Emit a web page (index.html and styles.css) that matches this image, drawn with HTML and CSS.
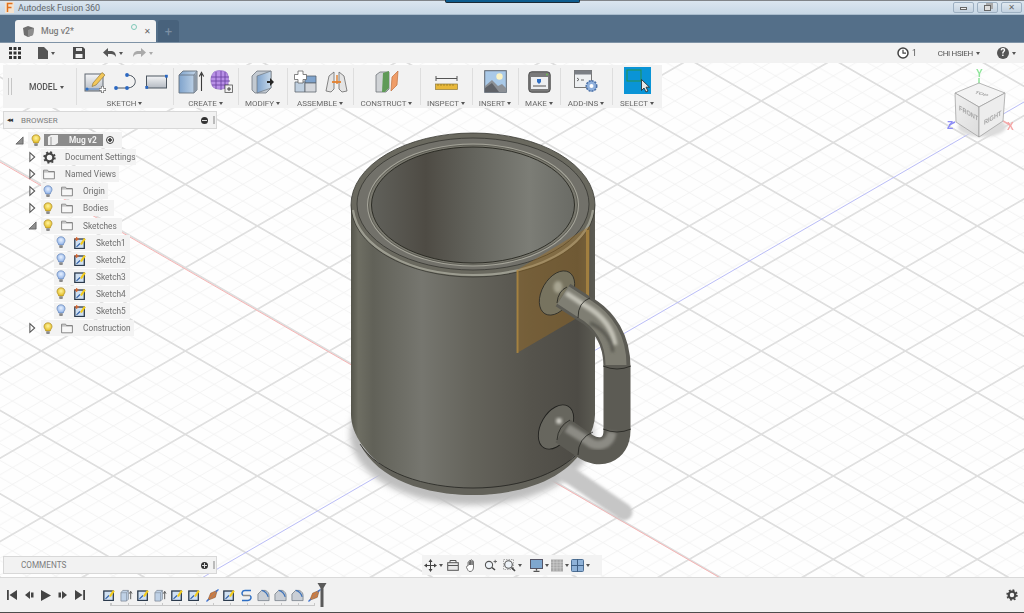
FILE: index.html
```html
<!DOCTYPE html>
<html lang="en">
<head>
<meta charset="utf-8">
<title>Autodesk Fusion 360</title>
<link rel="stylesheet" href="styles.css">
</head>
<body>
<svg class="defs" width="0" height="0" aria-hidden="true">
  <defs>
    <linearGradient id="gBlue" x1="0" y1="0" x2="1" y2="0"><stop offset="0" stop-color="#7fa3cc"/><stop offset="1" stop-color="#c6d8ea"/></linearGradient>
    <linearGradient id="gGrey" x1="0" y1="0" x2="0" y2="1"><stop offset="0" stop-color="#f4f5f7"/><stop offset="1" stop-color="#b4bac2"/></linearGradient>
    <radialGradient id="gBulbY" cx=".5" cy=".4" r=".6"><stop offset="0" stop-color="#fff4a0"/><stop offset="1" stop-color="#e2b91c"/></radialGradient>
    <radialGradient id="gBulbB" cx=".5" cy=".4" r=".6"><stop offset="0" stop-color="#e8f1ff"/><stop offset="1" stop-color="#8fb2e8"/></radialGradient>
    <symbol id="bulbY" viewBox="0 0 10 13"><path d="M5 .8C2.600.8 1 2.500 1 4.500c0 1.700 1.400 2.600 1.800 4.500h4.400C7.600 7.100 9 6.200 9 4.500 9 2.500 7.400.8 5 .8z" fill="url(#gBulbY)" stroke="#a98a2a" stroke-width=".7"/><rect x="3.200" y="9.200" width="3.600" height="2.800" rx=".8" fill="#8a8a8a"/></symbol>
    <symbol id="bulbB" viewBox="0 0 10 13"><path d="M5 .8C2.600.8 1 2.500 1 4.500c0 1.700 1.400 2.600 1.800 4.500h4.400C7.600 7.100 9 6.200 9 4.500 9 2.500 7.400.8 5 .8z" fill="url(#gBulbB)" stroke="#5f7fb5" stroke-width=".7"/><rect x="3.200" y="9.200" width="3.600" height="2.800" rx=".8" fill="#8a8a8a"/></symbol>
    <symbol id="folder" viewBox="0 0 12 11"><path d="M.6 9.800V1.200h4l1 1.400h5.800v7.200z" fill="#f7f7f7" stroke="#6d6d6d" stroke-width=".8"/><path d="M.6 2.900h10.800" stroke="#6d6d6d" stroke-width=".6"/></symbol>
    <symbol id="open" viewBox="0 0 8 12"><path d="M1 1l5.500 5L1 11z" fill="#fafafa" stroke="#555" stroke-width="1.200"/></symbol>
    <symbol id="closed" viewBox="0 0 10 10"><path d="M9 1v8H1z" fill="#8e8e8e" stroke="#555" stroke-width=".8"/></symbol>
    <symbol id="sk" viewBox="0 0 12 12"><rect x=".8" y="2" width="9.500" height="9.500" fill="#cfe0f2" stroke="#2b3a4c" stroke-width="1.300"/><path d="M2.500 9.800L6 6.500" stroke="#2f5fa8" stroke-width="1.100"/><path d="M6 7L10 1l1.800 1.200-4 5.800z" fill="#f4cc1c"/></symbol>
    <symbol id="skw" viewBox="0 0 12 12"><rect x=".8" y="2" width="9.500" height="9.500" fill="#cfe0f2" stroke="#2b3a4c" stroke-width="1.300"/><path d="M2.500 9.800L6 6.500" stroke="#2f5fa8" stroke-width="1.100"/><path d="M6 7L10 1l1.800 1.200-4 5.800z" fill="#f4cc1c"/><path d="M.5 2h4.500M2.700 0v4" stroke="#e0662a" stroke-width="1.100"/></symbol>
    <symbol id="ex" viewBox="0 0 14 14"><path d="M1 4L3 1.500h6V11l-2 2H1z" fill="#bfd1e6" stroke="#7c8794" stroke-width=".8"/><path d="M7 4V13M1 4H7L9 1.500" stroke="#7c8794" stroke-width=".6" fill="none"/><path d="M11.500 11V3M10 5l1.500-2.500L13 5" stroke="#555" fill="none" stroke-width="1"/></symbol>
    <symbol id="fil" viewBox="0 0 14 14"><path d="M1 12.500V5.500L5 1.500h4c2.500 1 4 3 4 5.500v5.500z" fill="#c9ced5" stroke="#6f7882" stroke-width=".8"/><path d="M5 1.500c3 .5 6 3.500 7 7" stroke="#3f73b8" fill="none" stroke-width="1.300"/></symbol>
    <symbol id="pl" viewBox="0 0 14 14"><path d="M2 12L5 4.500 12 1.500 10 9z" fill="#cf7a3f" stroke="#8e5a34" stroke-width=".7"/><path d="M4 11L10.500 3.500" stroke="#888" stroke-width=".8"/><path d="M.5 13.500L3 11M10.500 3L13.500 .5" stroke="#3f73d0" stroke-width="1.400"/></symbol>
    <pattern id="grid" width="100" height="100" patternUnits="userSpaceOnUse" patternTransform="matrix(.72 .4167 .72 -.4167 473.3 434.3)">
      <path d="M20 0V100M40 0V100M60 0V100M80 0V100M0 20H100M0 40H100M0 60H100M0 80H100" stroke="#f2f2f2" stroke-width="1.100" fill="none"/>
      <path d="M0 0V100M100 0V100M0 0H100M0 100H100" stroke="#dedede" stroke-width="2.200" fill="none"/>
    </pattern>
    <linearGradient id="body" gradientUnits="userSpaceOnUse" x1="351" y1="0" x2="595" y2="0">
      <stop offset="0" stop-color="#55554b"/><stop offset=".03" stop-color="#6e6e63"/><stop offset=".09" stop-color="#616158"/><stop offset=".29" stop-color="#76766f"/><stop offset=".5" stop-color="#64635b"/><stop offset=".74" stop-color="#55534c"/><stop offset=".93" stop-color="#4d4b45"/><stop offset="1" stop-color="#5c5b53"/>
    </linearGradient>
    <linearGradient id="inner" gradientUnits="userSpaceOnUse" x1="371" y1="0" x2="574" y2="0">
      <stop offset="0" stop-color="#61615b"/><stop offset=".27" stop-color="#4e4b44"/><stop offset=".5" stop-color="#63635c"/><stop offset=".78" stop-color="#7c7d76"/><stop offset="1" stop-color="#6a6b65"/>
    </linearGradient>
    <linearGradient id="cubeL" x1="0" y1="0" x2="1" y2="1"><stop offset="0" stop-color="#f0f0f0"/><stop offset="1" stop-color="#dcdcdc"/></linearGradient>
    <filter id="b3" x="-20%" y="-20%" width="140%" height="140%"><feGaussianBlur stdDeviation="3"/></filter>
    <filter id="b2" x="-30%" y="-30%" width="160%" height="160%"><feGaussianBlur stdDeviation="1.500"/></filter>
  </defs>
</svg>

<div class="app">
  <header class="titlebar">
    <svg class="ficon" viewBox="0 0 9 11" width="9" height="11"><rect width="9" height="11" fill="#f3e3cf"/><path d="M2.500 10V1.500h5M2.500 5.500h4" stroke="#e0701c" stroke-width="1.500" fill="none"/></svg>
    <span class="apptitle">Autodesk Fusion 360</span>
    <div class="notch"></div>
    <div class="winbtns">
      <button class="winbtn"><span class="win-min"></span></button>
      <button class="winbtn"><span class="win-max"></span></button>
      <button class="winbtn winx">✕</button>
    </div>
  </header>

  <div class="tabbar">
    <div class="tab">
      <svg width="13" height="13" viewBox="0 0 13 13"><path d="M1 3l5-2 6 2-1 7-5 2-4-2z" fill="#6e6e6e"/><path d="M6 5l6-2-1 7-5 2z" fill="#8d8d8d"/></svg>
      <span class="tabname">Mug v2*</span>
      <span class="tabbusy"></span>
      <span class="tabclose">✕</span>
    </div>
    <div class="tabnew">+</div>
  </div>

  <div class="quickbar">
    <svg class="q-apps" width="12" height="12" viewBox="0 0 12 12" fill="#333"><path d="M0 0h3v3H0zM4.500 0h3v3h-3zM9 0h3v3H9zM0 4.500h3v3H0zM4.500 4.500h3v3h-3zM9 4.500h3v3H9zM0 9h3v3H0zM4.500 9h3v3h-3zM9 9h3v3H9z"/></svg>
    <svg class="q-file" width="10" height="12" viewBox="0 0 10 12"><path d="M0 0h6l4 4v8H0z" fill="#555"/></svg><i class="caret"></i>
    <svg class="q-save" width="12" height="12" viewBox="0 0 12 12"><path d="M0 0h10l2 2v10H0z" fill="#4a4a4a"/><path d="M3 1h6v3H3z" fill="#e8e8e8"/><path d="M2.500 7h7v4h-7z" fill="#f2f2f2"/></svg>
    <svg class="q-undo" width="13" height="10" viewBox="0 0 13 10"><path d="M5 0v3h3c3 0 5 2 5 6-1-2-3-3-5-3H5v3L0 4.500z" fill="#555"/></svg><i class="caret"></i>
    <svg class="q-redo" width="13" height="10" viewBox="0 0 13 10"><path d="M8 0v3H5C2 3 0 5 0 9c1-2 3-3 5-3h3v3l5-4.500z" fill="#aaa"/></svg><i class="caret caret-dim"></i>
    <div class="q-right">
      <svg width="12" height="12" viewBox="0 0 12 12"><circle cx="6" cy="6" r="5" fill="#fff" stroke="#444" stroke-width="1.500"/><path d="M6 2.800V6.200H9" stroke="#444" stroke-width="1.200" fill="none"/></svg>
      <span class="q-count">1</span>
      <span class="q-user">CHI HSIEH</span><i class="caret"></i>
      <span class="q-help">?</span><i class="caret"></i>
    </div>
  </div>

  <main class="canvas">
    <svg class="scene" width="1024" height="514" viewBox="0 63 1024 514">
      <rect x="0" y="63" width="1024" height="514" fill="#fefefe"/>
      <rect x="0" y="63" width="1024" height="514" fill="url(#grid)"/>
      <path d="M0 162L722 579" stroke="#f6b4b4" stroke-width="1" fill="none"/>
      <path d="M200 579L1024 102" stroke="#babdf7" stroke-width="1" fill="none"/>

      <ellipse cx="472" cy="434" rx="122" ry="71" fill="#bebebe" filter="url(#b3)"/>
      <path d="M565 472L624 512" stroke="#c6c6c6" stroke-width="17" stroke-linecap="round" fill="none" filter="url(#b2)"/>

      <path d="M351 205V415C352 455 410 495 473 495C536 495 594 455 595 415V205z" fill="url(#body)"/>
      <path d="M360 444C378 472 424 488.500 473 488.500C522 488.500 566 472 586 444C568 480 520 495 473 495C426 495 378 480 360 444z" fill="#63625a"/>
      <path d="M360 444C378 472 424 488 473 488C522 488 566 472 586 444" stroke="#23231f" stroke-width=".8" fill="none"/>

      <ellipse cx="473" cy="205" rx="122" ry="72" fill="#6a695f" stroke="#3a3a33" stroke-width=".8"/>
      <path d="M353 210C358 247 410 275 473 275C536 275 588 247 593 210" stroke="#aeada0" stroke-width="2.200" fill="none" opacity=".75"/>
      <ellipse cx="473" cy="204" rx="116" ry="66" fill="#72716a" stroke="#2e2e29" stroke-width=".7"/>
      <ellipse cx="473" cy="205" rx="106" ry="61.500" fill="#a6a59a"/>
      <ellipse cx="473" cy="205" rx="104.500" ry="60" fill="#7a796f" stroke="#2e2e29" stroke-width=".5"/>
      <ellipse cx="473" cy="205" rx="101.500" ry="58" fill="url(#inner)" stroke="#26261f" stroke-width=".9"/>

      <path d="M517 270L590 226L589 311L517 353z" fill="#a8721a" fill-opacity=".38"/>
      <path d="M517.500 270V353" stroke="#b08a42" stroke-width="2" fill="none" opacity=".8"/>
      <path d="M587.500 230V312" stroke="#b08a42" stroke-width="3" fill="none" opacity=".75"/>

      <ellipse cx="557" cy="293" rx="15" ry="24" transform="rotate(30 557 293)" fill="#77735f" stroke="#2e2e28" stroke-width=".8"/>
      <ellipse cx="558" cy="287" rx="4.500" ry="6" fill="#b8b5a2" opacity=".75" filter="url(#b2)"/>
      <ellipse cx="556" cy="427" rx="15" ry="24" transform="rotate(30 556 427)" fill="#67665e" stroke="#232320" stroke-width=".9"/>
      <circle cx="559" cy="421" r="3" fill="#cfcec6" filter="url(#b2)"/>

      <path d="M563 295L583 308C605 320 617 341 617 367V430C617 452 598 455 585 446L563 431" stroke="#5c5b54" stroke-width="27" fill="none"/>
      <path d="M563 295L583 308C605 320 616 341 616 365" stroke="#7f7e73" stroke-width="21" fill="none"/>
      <path d="M566 293L586 306C603 316 613 330 615 345" stroke="#c4c3b8" stroke-width="5" fill="none" filter="url(#b2)"/>
      <path d="M613 352C611 337 600 327 590 323" stroke="#55544e" stroke-width="3" fill="none" filter="url(#b2)"/>
      <path d="M614 367V430" stroke="#7e7e78" stroke-width="15" fill="none" filter="url(#b2)"/>
      <path d="M612 432C610 446 596 448 588 441L567 428" stroke="#8c8b84" stroke-width="9" fill="none" filter="url(#b2)"/>
      <path d="M603 366Q617 372 631 366M603 429Q617 435 631 429M578 318Q578 302 590 298M578 455Q578 438 593 432M557 303Q558 291 567 287M557 440Q558 426 570 420" stroke="#232320" stroke-width=".8" fill="none"/>

      <g class="cube">
        <path d="M979 78V84" stroke="#8fe59a" stroke-width="1.500"/>
        <text x="976" y="77" class="ax ax-y">Y</text>
        <path d="M955 122l-6 3" stroke="#8d8df5" stroke-width="1.500"/>
        <text x="947" y="129" class="ax ax-z">Z</text>
        <path d="M1003 121l7 4" stroke="#f5a5a5" stroke-width="1.500"/>
        <text x="1007" y="130" class="ax ax-x">X</text>
        <ellipse cx="982" cy="127" rx="24" ry="10" fill="#dcdcdc" filter="url(#b2)"/>
        <path d="M955 93L979 83L1005 93L979 107z" fill="#f3f3f3" stroke="#9a9a9a" stroke-width=".7"/>
        <path d="M955 93L979 107V137L956 122z" fill="url(#cubeL)" stroke="#9a9a9a" stroke-width=".7"/>
        <path d="M979 107L1005 93L1003 121L979 137z" fill="#ededed" stroke="#9a9a9a" stroke-width=".7"/>
        <text class="cubetxt" transform="matrix(.9 .25 -.5 .4 974 93)">TOP</text>
        <text class="cubetxt" transform="matrix(.8 .46 0 1 959 110)">FRONT</text>
        <text class="cubetxt" transform="matrix(.8 -.46 0 1 984 125)">RIGHT</text>
      </g>
    </svg>

    <nav class="toolbar">
      <div class="tgroup t-model">
        <span class="grip"></span>
        <span class="modelbtn">MODEL<i class="caret"></i></span>
      </div>
      <div class="tgroup t-sketch">
        <div class="ticons">
          <svg width="23" height="22" viewBox="0 0 23 22"><rect x="1" y="3" width="18" height="17" fill="url(#gGrey)" stroke="#5f6770" stroke-width="1"/><circle cx="3" cy="18" r="1.600" fill="#2f6fc4"/><path d="M3 18h12" stroke="#2f6fc4" stroke-width=".8"/><path d="M9 12L18 1.500 21 4l-9 10-4 1.500z" fill="#f2c75a" stroke="#8a6d2a" stroke-width=".6"/><path d="M15 18.500h7M18.500 15v7" stroke="#666" stroke-width="3"/><path d="M15.500 18.500h6M18.500 15.500v6" stroke="#fff" stroke-width="1.600"/></svg>
          <svg width="26" height="18" viewBox="0 0 26 18"><path d="M3 15H14M14 2c11 0 11 13 0 13" stroke="#4d5660" stroke-width="1" fill="none"/><circle cx="3" cy="15" r="1.900" fill="#2a67c2"/><circle cx="14" cy="15" r="1.900" fill="#2a67c2"/><circle cx="14" cy="2" r="1.900" fill="#2a67c2"/></svg>
          <svg width="23" height="16" viewBox="0 0 23 16"><rect x="1.500" y="2" width="20" height="12" fill="url(#gGrey)" stroke="#4d5660" stroke-width="1"/><rect x=".3" y="12" width="2.800" height="2.800" fill="#2a67c2"/><rect x="20" y=".8" width="2.800" height="2.800" fill="#2a67c2"/></svg>
        </div>
        <span class="tlabel">SKETCH<i class="caret"></i></span>
      </div>
      <div class="tgroup t-create">
        <div class="ticons">
          <svg width="27" height="24" viewBox="0 0 27 24"><path d="M1 5l4-4h14v19l-3 3H1z" fill="url(#gBlue)" stroke="#68727d" stroke-width=".9"/><path d="M1 5h15v18M16 5l3-4" stroke="#68727d" stroke-width=".8" fill="none"/><path d="M17 5L19 1V20L16 23V5" fill="#8d99a6"/><path d="M23.500 21V4M21.300 6.500L23.500 2.500L25.700 6.500" stroke="#3c3c3c" stroke-width="1.100" fill="none"/></svg>
          <svg width="24" height="24" viewBox="0 0 24 24"><path d="M5 2C9 0 15 0 18 3c2 3 2 10 0 14-4 3-10 3-14 0C1 13 1 6 5 2z" fill="#b890e6" stroke="#8f6cc0" stroke-width=".6"/><path d="M2 7h18M2 11h19M3 15h17M7 2v17M12 1v19M16 2v17" stroke="#6d45a5" stroke-width=".9"/><rect x="16" y="15" width="7.500" height="7.500" fill="#f0f0f0" stroke="#555" stroke-width=".8"/><path d="M18 19h4M20 17v4" stroke="#333" stroke-width=".9"/></svg>
        </div>
        <span class="tlabel">CREATE<i class="caret"></i></span>
      </div>
      <div class="tgroup t-modify">
        <div class="ticons">
          <svg width="24" height="24" viewBox="0 0 24 24"><path d="M1 6l5-5h14v17l-5 5H4L1 20z" fill="#c2c9d1" stroke="#6f7780" stroke-width=".8"/><path d="M6 6l14-5v17L6 23z" fill="url(#gBlue)" stroke="#6f7780" stroke-width=".7"/><path d="M16 11h3V8l4 4-4 4v-3h-3z" fill="#262626"/></svg>
        </div>
        <span class="tlabel">MODIFY<i class="caret"></i></span>
      </div>
      <div class="tgroup t-assemble">
        <div class="ticons">
          <svg width="24" height="23" viewBox="0 0 24 23"><path d="M12 6h11v7H12z" fill="#7fa3cc" stroke="#56606c" stroke-width=".8"/><path d="M2 12h10v10H2z" fill="#c0d0e0" stroke="#5f6770" stroke-width=".8"/><path d="M12 13h11v9H12z" fill="#d4d7dc" stroke="#5f6770" stroke-width=".8"/><path d="M5 1h5v3.500h3.500v5H10V13H5V9.500H1.500v-5H5z" fill="#fff" stroke="#666" stroke-width=".8"/></svg>
          <svg width="23" height="23" viewBox="0 0 23 23"><path d="M1 21L4 6 9 2v17l-3 3z" fill="#e4e4e4" stroke="#6a6a6a" stroke-width=".8"/><path d="M22 21L19 6l-5-4v17l3 3z" fill="#e4e4e4" stroke="#6a6a6a" stroke-width=".8"/><path d="M7 12h9" stroke="#e2802e" stroke-width="1.800"/><path d="M12 5v9" stroke="#e2802e" stroke-width="1.400"/></svg>
        </div>
        <span class="tlabel">ASSEMBLE<i class="caret"></i></span>
      </div>
      <div class="tgroup t-construct">
        <div class="ticons">
          <svg width="24" height="23" viewBox="0 0 24 23"><path d="M1 5L5 2h9v17l-3 3H1z" fill="#d0d3d6" stroke="#6f7378" stroke-width=".8"/><path d="M8 3l6-2v17l-4 4H7z" fill="#5f9a57"/><path d="M16 21l1-14 6-6-1 14z" fill="#ef9d68" stroke="#c0703c" stroke-width=".7"/></svg>
        </div>
        <span class="tlabel">CONSTRUCT<i class="caret"></i></span>
      </div>
      <div class="tgroup t-inspect">
        <div class="ticons">
          <svg width="23" height="16" viewBox="0 0 23 16"><path d="M1 4.500h21M1 2v5M22 2v5" stroke="#555" stroke-width="1"/><rect x=".5" y="10" width="22" height="5.500" fill="#e8b83a" stroke="#8f7a3a" stroke-width=".7"/><path d="M3 10v2M6 10v2M9 10v2M12 10v2M15 10v2M18 10v2" stroke="#7a6420" stroke-width=".6"/></svg>
        </div>
        <span class="tlabel">INSPECT<i class="caret"></i></span>
      </div>
      <div class="tgroup t-insert">
        <div class="ticons">
          <svg width="23" height="23" viewBox="0 0 23 23"><rect x=".7" y=".7" width="21.600" height="21.600" fill="#a9c9e8" stroke="#5f6770" stroke-width="1"/><circle cx="15.500" cy="6.500" r="3.200" fill="#fbf3c4"/><path d="M1 22V16l7-6 6 6 4-2 4 4v4z" fill="#8c9096"/><path d="M1 22v-4l7-5 7 9z" fill="#5f6268"/></svg>
        </div>
        <span class="tlabel">INSERT<i class="caret"></i></span>
      </div>
      <div class="tgroup t-make">
        <div class="ticons">
          <svg width="23" height="22" viewBox="0 0 23 22"><rect x=".8" y=".8" width="21.400" height="20.400" rx="3" fill="#7a7a7a" stroke="#4a4a4a"/><rect x="3" y="6" width="17" height="12" fill="#eef0f2"/><path d="M9 8h4v3l-2 2-2-2z" fill="#2f6fc4"/><path d="M5 15h13" stroke="#888" stroke-width="1.500"/><circle cx="19" cy="3.500" r=".9" fill="#6fbf4f"/></svg>
        </div>
        <span class="tlabel">MAKE<i class="caret"></i></span>
      </div>
      <div class="tgroup t-addins">
        <div class="ticons">
          <svg width="24" height="23" viewBox="0 0 24 23"><rect x=".5" y=".5" width="17" height="17" fill="#eef0f2" stroke="#777"/><rect x=".5" y=".5" width="17" height="4" fill="#7b7f85"/><path d="M3 8l2 1.500L3 11M7 10h3" stroke="#444" stroke-width=".8" fill="none"/><circle cx="17.500" cy="16" r="5.200" fill="#8fb0dc" stroke="#4d72a8" stroke-width="1.600" stroke-dasharray="2 1"/><circle cx="17.500" cy="16" r="2" fill="#fff"/></svg>
        </div>
        <span class="tlabel">ADD-INS<i class="caret"></i></span>
      </div>
      <div class="tgroup t-select">
        <div class="selectbtn">
          <svg width="27" height="27" viewBox="0 0 27 27"><rect x="3" y="3" width="14" height="11" fill="none" stroke="#27914e" stroke-width="1"/><path d="M17.500 12.500v11l2.500-2.500 2 4 2-1-2-3.800h3.500z" fill="#e8e8e8" stroke="#222" stroke-width=".8"/></svg>
        </div>
        <span class="tlabel">SELECT<i class="caret"></i></span>
      </div>
    </nav>

    <aside class="panelhead browser">
      <span class="rew">◂◂</span><span class="ptitle">BROWSER</span><span class="pdot pdot-minus"></span><span class="psplit"></span>
    </aside>

    <ul class="tree">
      <li class="row d0"><svg class="arr arr-c" width="9" height="9"><use href="#closed"/></svg>
        <div class="chip c-root"><svg class="bulb" width="10" height="13"><use href="#bulbY"/></svg>
          <span class="docname"><svg width="12" height="12" viewBox="0 0 12 12"><path d="M1 3l3-2h7v8l-3 2H1z" fill="#eee"/><path d="M4 3V11" stroke="#999"/></svg><b>Mug v2</b></span>
          <span class="radio"></span></div></li>
      <li class="row d1"><svg class="arr" width="7" height="12"><use href="#open"/></svg>
        <div class="chip c-docset"><svg class="gear" width="13" height="13" viewBox="0 0 13 13"><circle cx="6.500" cy="6.500" r="3.800" fill="none" stroke="#444" stroke-width="2.200"/><circle cx="6.500" cy="6.500" r="5.300" fill="none" stroke="#444" stroke-width="1.800" stroke-dasharray="2 2.160"/></svg><span class="lbl">Document Settings</span></div></li>
      <li class="row d1"><svg class="arr" width="7" height="12"><use href="#open"/></svg>
        <div class="chip c-named"><svg class="fold0" width="12" height="11"><use href="#folder"/></svg><span class="lbl">Named Views</span></div></li>
      <li class="row d1"><svg class="arr" width="7" height="12"><use href="#open"/></svg>
        <div class="chip c-origin"><svg class="bulb" width="10" height="13"><use href="#bulbB"/></svg><svg class="fold" width="12" height="11"><use href="#folder"/></svg><span class="lbl">Origin</span></div></li>
      <li class="row d1"><svg class="arr" width="7" height="12"><use href="#open"/></svg>
        <div class="chip c-bodies"><svg class="bulb" width="10" height="13"><use href="#bulbY"/></svg><svg class="fold" width="12" height="11"><use href="#folder"/></svg><span class="lbl">Bodies</span></div></li>
      <li class="row d1"><svg class="arr arr-s" width="9" height="9"><use href="#closed"/></svg>
        <div class="chip c-sketches"><svg class="bulb" width="10" height="13"><use href="#bulbY"/></svg><svg class="fold" width="12" height="11"><use href="#folder"/></svg><span class="lbl">Sketches</span></div></li>
      <li class="row d2"><div class="chip c-sk"><svg class="bulb" width="10" height="13"><use href="#bulbB"/></svg><svg class="skic" width="12" height="12"><use href="#skw"/></svg><span class="lbl">Sketch1</span></div></li>
      <li class="row d2"><div class="chip c-sk"><svg class="bulb" width="10" height="13"><use href="#bulbB"/></svg><svg class="skic" width="12" height="12"><use href="#skw"/></svg><span class="lbl">Sketch2</span></div></li>
      <li class="row d2"><div class="chip c-sk"><svg class="bulb" width="10" height="13"><use href="#bulbB"/></svg><svg class="skic" width="12" height="12"><use href="#sk"/></svg><span class="lbl">Sketch3</span></div></li>
      <li class="row d2"><div class="chip c-sk"><svg class="bulb" width="10" height="13"><use href="#bulbY"/></svg><svg class="skic" width="12" height="12"><use href="#skw"/></svg><span class="lbl">Sketch4</span></div></li>
      <li class="row d2"><div class="chip c-sk"><svg class="bulb" width="10" height="13"><use href="#bulbB"/></svg><svg class="skic" width="12" height="12"><use href="#skw"/></svg><span class="lbl">Sketch5</span></div></li>
      <li class="row d1"><svg class="arr" width="7" height="12"><use href="#open"/></svg>
        <div class="chip c-constr"><svg class="bulb" width="10" height="13"><use href="#bulbY"/></svg><svg class="fold" width="12" height="11"><use href="#folder"/></svg><span class="lbl">Construction</span></div></li>
    </ul>

    <aside class="panelhead comments">
      <span class="ptitle">COMMENTS</span><span class="pdot pdot-plus"></span><span class="psplit"></span>
    </aside>

    <div class="navbar">
      <svg width="13" height="13" viewBox="0 0 13 13"><path d="M6.500 0L8.500 3H7v3h3V4.500L13 6.500 10 8.500V7H7v3h1.500l-2 3-2-3H6V7H3v1.500L0 6.500 3 4.500V6h3V3H4.500z" fill="#444"/></svg><i class="caret"></i>
      <svg class="nv" width="12" height="12" viewBox="0 0 12 12"><rect x=".7" y="3.700" width="10.600" height="7.600" fill="#e8e8e8" stroke="#555"/><path d="M3 3.500V1.500h6v2M1 6.500h10" stroke="#555" fill="none"/></svg>
      <svg class="nv" width="13" height="13" viewBox="0 0 13 13"><path d="M3 7V3.500c0-1 1.300-1 1.300 0V6 2c0-1 1.400-1 1.400 0v4-4.500c0-1 1.400-1 1.400 0V6 2.500c0-1 1.400-1 1.400 0V8c0 3-1.500 4.500-3.500 4.500S3 11 1.500 8.500c-.5-1 .8-1.800 1.500-1.500z" fill="#fff" stroke="#555" stroke-width=".8"/></svg>
      <svg class="nv" width="13" height="12" viewBox="0 0 13 12"><circle cx="5" cy="6" r="3.600" fill="#eef3f8" stroke="#555" stroke-width="1.100"/><path d="M8 8.500L11 11" stroke="#444" stroke-width="1.600"/><path d="M9.500 2.500h3.500M11.200.8v3.400" stroke="#555" stroke-width=".8"/></svg>
      <svg class="nv" width="13" height="13" viewBox="0 0 13 13"><rect x=".5" y=".5" width="10" height="10" fill="none" stroke="#aaa" stroke-dasharray="1.500 1"/><circle cx="5.500" cy="5.500" r="3.800" fill="#eef3f8" stroke="#555" stroke-width="1.100"/><path d="M8.500 8.500L12 12" stroke="#444" stroke-width="1.700"/></svg><i class="caret"></i>
      <svg class="nv2" width="13" height="13" viewBox="0 0 13 13"><rect x=".5" y=".5" width="12" height="9" fill="#7fa7cf" stroke="#556"/><path d="M6.500 9.500v2M3.500 12.500h6" stroke="#555" stroke-width="1.300"/></svg><i class="caret"></i>
      <svg class="nv3" width="12" height="13" viewBox="0 0 13 13"><rect width="13" height="13" fill="#a8a8a8"/><path d="M0 3h13M0 6h13M0 9h13M3 0v13M6.500 0v13M10 0v13" stroke="#d8d8d8" stroke-width=".6"/></svg><i class="caret"></i>
      <svg class="nv3" width="13" height="13" viewBox="0 0 13 13"><rect x=".5" y=".5" width="12" height="12" rx="1" fill="#8fb2d8" stroke="#4d6f94"/><path d="M6.500 0v13M0 6.500h13" stroke="#3f5f84"/></svg><i class="caret"></i>
    </div>
  </main>

  <footer class="timeline">
    <div class="tl-ctrl">
      <svg width="10" height="10" viewBox="0 0 10 10" fill="#444"><path d="M0 0h1.800v10H0zM10 0v10L2.500 5z"/></svg>
      <svg width="10" height="10" viewBox="0 0 10 10" fill="#444"><path d="M6 1v8L1 5zM7 2.500h2.500v5H7z"/></svg>
      <svg width="10" height="11" viewBox="0 0 10 11" fill="#444"><path d="M0 0l10 5.500L0 11z"/></svg>
      <svg width="10" height="10" viewBox="0 0 10 10" fill="#444"><path d="M4 1v8l5-4zM.5 2.500H3v5H.5z"/></svg>
      <svg width="10" height="10" viewBox="0 0 10 10" fill="#444"><path d="M10 0H8.200v10H10zM0 0v10l7.500-5z"/></svg>
    </div>
    <div class="tl-track">
      <div class="tl-items">
        <svg width="12" height="12"><use href="#sk"/></svg>
        <svg width="13" height="13"><use href="#ex"/></svg>
        <svg width="12" height="12"><use href="#sk"/></svg>
        <svg width="13" height="13"><use href="#ex"/></svg>
        <svg width="12" height="12"><use href="#sk"/></svg>
        <svg width="12" height="12"><use href="#sk"/></svg>
        <svg width="13" height="13"><use href="#pl"/></svg>
        <svg width="12" height="12"><use href="#sk"/></svg>
        <svg width="13" height="13" viewBox="0 0 13 13"><path d="M3 6.500C1 5 2 1.500 5 1.500h6M10 6.500c2 1.500 1 5-2 5H2" fill="none" stroke="#2f6fc4" stroke-width="1.500"/><path d="M3 6.500h7" stroke="#888" stroke-width="1.500"/></svg>
        <svg width="13" height="13"><use href="#fil"/></svg>
        <svg width="13" height="13"><use href="#fil"/></svg>
        <svg width="13" height="13"><use href="#fil"/></svg>
        <svg width="13" height="13"><use href="#pl"/></svg>
      </div>
      <div class="tl-rail"></div>
      <svg class="tl-marker" width="10" height="24" viewBox="0 0 9 24"><path d="M0 0h9L6 5v19H3V5z" fill="#5a5a5a"/></svg>
    </div>
    <svg class="tl-gear" width="12" height="12" viewBox="0 0 13 13"><circle cx="6.500" cy="6.500" r="3.600" fill="none" stroke="#444" stroke-width="2.400"/><circle cx="6.500" cy="6.500" r="5.300" fill="none" stroke="#444" stroke-width="1.800" stroke-dasharray="2 2.160"/></svg>
  </footer>
</div>
</body>
</html>
```
FILE: styles.css
```css
* { box-sizing: border-box; }
html, body { margin: 0; padding: 0; height: 100%; overflow: hidden; background: #444; }
body { font-family: "Roboto", "Liberation Sans", sans-serif; color: #6a6a6a; }
.defs { position: absolute; }
i { font-style: normal; }

.app { width: 1024px; height: 613px; display: flex; flex-direction: column; overflow: hidden; filter: blur(.4px); }

.caret { display: inline-block; width: 0; height: 0; border-left: 2.500px solid transparent; border-right: 2.500px solid transparent; border-top: 3px solid #555; margin-left: 3px; vertical-align: middle; }
.caret-dim { border-top-color: #aaa; }

/* title bar */
.titlebar { position: relative; flex: 0 0 15px; height: 15px; display: flex; align-items: center; padding-left: 5px; border-top: 1px solid #808488; border-bottom: 1px solid #a9bccd; background: linear-gradient(#dae5ef, #c8d8e6); }
.apptitle { font-size: 9px; margin-left: 4px; color: #63686c; letter-spacing: -.12px; }
.notch { position: absolute; left: 445px; top: -1px; width: 135px; height: 3px; background: #0e5c8e; border: 1px solid #1b2a36; border-top: 0; border-radius: 0 0 2px 2px; }
.winbtns { margin-left: auto; display: flex; gap: 3px; padding-right: 2px; align-self: flex-start; padding-top: 1px; }
.winbtn { width: 21px; height: 11px; padding: 0; display: flex; align-items: center; justify-content: center; border: 1px solid #9db0c2; border-radius: 2px; background: linear-gradient(#dfe8f0, #c3d2e0); font: 8px "DejaVu Sans", sans-serif; color: #666; }
.win-min { width: 7px; height: 3px; border: 1px solid #666; background: #eee; margin-top: 2px; }
.win-max { width: 7px; height: 6px; border: 1px solid #666; background: #ddd; box-shadow: 2px -2px 0 0 #aaa; }

/* tab bar */
.tabbar { flex: 0 0 28px; height: 28px; display: flex; align-items: flex-end; padding-left: 15px; gap: 2px; background: #546f89; border-bottom: 1px solid #7f93a6; }
.tab { width: 141px; height: 22px; display: flex; align-items: center; padding-left: 7px; background: #f3f3f3; border-radius: 3px 3px 0 0; }
.tabname { font-size: 8.800px; margin-left: 6px; width: 34px; color: #7d7d7d; font-weight: 500; white-space: nowrap; }
.tabbusy { width: 6px; height: 6px; margin: -8px 0 0 56px; border: 1px solid #7fc8b8; border-radius: 50%; }
.tabclose { font: 8px "DejaVu Sans", sans-serif; margin-left: 7px; color: #666; }
.tabnew { width: 21px; height: 22px; display: flex; align-items: center; justify-content: center; background: #48627c; border-radius: 3px 3px 0 0; color: #7c8fa3; font-size: 13px; }

/* quick access */
.quickbar { flex: 0 0 20px; height: 20px; display: flex; align-items: center; padding-left: 9px; background: #f2f2f2; }
.q-file { margin-left: 17px; }
.q-save { margin-left: 18px; }
.q-undo { margin-left: 18px; }
.q-redo { margin-left: 10px; }
.q-right { margin-left: auto; display: flex; align-items: center; padding-right: 8px; }
.q-count { font-size: 8.500px; margin-left: 3px; color: #555; }
.q-user { font-size: 8px; margin-left: 21px; color: #555; letter-spacing: -.3px; }
.q-help { width: 12px; height: 12px; margin-left: 17px; border-radius: 50%; background: #555; color: #fff; font-size: 10px; font-weight: 700; text-align: center; line-height: 12px; }

/* canvas */
.canvas { position: relative; flex: 1 1 auto; overflow: hidden; background: #fff; }
.scene { display: block; }
.ax { font: 700 10px "Liberation Sans", sans-serif; }
.ax-y { fill: #8fe59a; }
.ax-z { fill: #8d8df5; }
.ax-x { fill: #f5a5a5; }
.cubetxt { font: 700 7px "Liberation Sans", sans-serif; fill: #a4a4a4; }

/* toolbar */
.toolbar { position: absolute; left: 3px; top: 2px; width: 659px; height: 43px; display: flex; background: #f2f2f2; }
.tgroup { position: relative; display: flex; flex-direction: column; align-items: center; justify-content: flex-end; }
.tgroup + .tgroup::before { content: ""; position: absolute; left: 0; top: 3px; bottom: 3px; width: 1px; background: #dedede; }
.ticons { flex: 1; display: flex; align-items: center; justify-content: center; gap: 4px; }
.tlabel { font-size: 8px; color: #6a6a6a; line-height: 12px; height: 10px; white-space: nowrap; }
.tlabel .caret { margin-left: 2px; }
.t-model { width: 73px; flex-direction: row; justify-content: flex-start; align-items: center; }
.grip { width: 4px; height: 17px; margin-left: 5px; border-left: 1px solid #c6c6c6; border-right: 1px solid #c6c6c6; }
.modelbtn { margin-left: 17px; font-size: 8.500px; font-weight: 500; color: #555; }
.t-sketch { width: 97px; }
.t-sketch .ticons { gap: 6px; padding-left: 3px; }
.t-create { width: 65px; }
.t-modify { width: 49px; }
.t-assemble { width: 66px; }
.t-assemble .ticons { gap: 8px; }
.t-construct { width: 67px; }
.t-inspect { width: 52px; }
.t-insert { width: 46px; }
.t-make { width: 42px; }
.t-addins { width: 52px; }
.t-select { width: 50px; }
.selectbtn { width: 27px; height: 27px; margin-bottom: 4px; background: #0a94d6; }

/* panels */
.panelhead { position: absolute; left: 3px; width: 214px; height: 18px; display: flex; align-items: center; background: #f2f2f2; border: 1px solid #d8d8d8; }
.browser { top: 48px; }
.comments { top: 493px; }
.rew { font: 7px "DejaVu Sans", sans-serif; color: #333; margin-left: 3px; width: 14px; letter-spacing: -1px; }
.ptitle { font-size: 8px; color: #7d7d7d; }
.comments .ptitle { margin-left: 17px; font-size: 8.200px; }
.pdot { position: relative; margin-left: auto; width: 7px; height: 7px; border-radius: 50%; background: #333; }
.pdot::after { content: ""; position: absolute; left: 1px; right: 1px; top: 3px; height: 1px; background: #ddd; }
.pdot-plus::before { content: ""; position: absolute; top: 1px; bottom: 1px; left: 3px; width: 1px; background: #ddd; }
.psplit { width: 2px; height: 8px; margin: 0 1px 0 5px; background: #bbb; }

/* tree */
.tree { position: absolute; left: 0; top: 69px; width: 220px; margin: 0; padding: 0; list-style: none; display: flex; flex-direction: column; gap: 1px; }
.row { height: 16.100px; display: flex; align-items: center; position: relative; }
.d0 { padding-left: 15px; }
.d1 { padding-left: 29px; }
.d2 { padding-left: 54px; }
.arr { flex: 0 0 7px; width: 7px; }
.arr-c { flex-basis: 9px; width: 9px; }
.arr-s { flex-basis: 9px; width: 9px; margin-left: -1px; }
.chip { height: 16px; display: flex; align-items: center; background: #f3f3f3; }
.d0 .chip { margin-left: 4px; }
.d1 .chip { margin-left: 5px; }
.arr-s + .chip { margin-left: 4px; }
.c-root { width: 94px; padding-left: 3px; }
.c-docset { width: 95px; padding-left: 2px; }
.c-named { width: 78px; padding-left: 2px; }
.c-origin { width: 67px; padding-left: 2px; }
.c-bodies { width: 73px; padding-left: 2px; }
.c-sketches { width: 81px; padding-left: 2px; }
.c-constr { width: 93px; padding-left: 2px; }
.c-sk { width: 76px; padding-left: 2px; }
.fold { margin-left: 8px; }
.skic { margin-left: 8px; }
.lbl { font-size: 8.300px; color: #6e6e6e; white-space: nowrap; }
.gear + .lbl { margin-left: 9px; }
.fold0 + .lbl { margin-left: 10px; }
.fold + .lbl { margin-left: 10px; }
.skic + .lbl { margin-left: 10px; }
.docname { width: 59px; height: 12px; margin-left: 3px; display: flex; align-items: center; gap: 10px; padding-left: 3px; background: #8b8b8b; }
.docname b { color: #f2f2f2; font-size: 8.300px; font-weight: 700; }
.radio { width: 8px; height: 8px; margin-left: 3px; border: 1px solid #444; border-radius: 50%; background: radial-gradient(circle, #444 0 1.500px, #f6f6f6 2px); }

/* navigation bar */
.navbar { position: absolute; left: 422px; top: 492px; width: 180px; height: 20px; display: flex; align-items: center; padding-left: 2px; background: #f3f3f3; }
.navbar .caret { margin-left: 2px; }
.nv { margin-left: 6px; }
.caret + .nv { margin-left: 4px; }
.nv2 { margin-left: 8px; }
.nv3 { margin-left: 2px; }

/* timeline */
.timeline { flex: 0 0 36px; height: 36px; display: flex; align-items: flex-start; background: #f1f1f1; border-top: 1px solid #d9d9d9; border-bottom: 1px solid #4c4c4c; }
.tl-ctrl { display: flex; gap: 7px; padding: 12px 0 0 7px; width: 103px; }
.tl-track { position: relative; flex: 1; padding-top: 10px; }
.tl-items { display: grid; grid-template-columns: repeat(13, 17.100px); align-items: center; height: 14px; }
.tl-rail { width: 205px; height: 3px; margin: 1px 0 0 7px; border: 1px solid #c8c8c8; border-top: 0; background: repeating-linear-gradient(90deg, #c8c8c8 0 1px, transparent 1px 17px); }
.tl-marker { position: absolute; left: 214px; top: 5px; }
.tl-gear { margin: 11px 6px 0 0; }
```
